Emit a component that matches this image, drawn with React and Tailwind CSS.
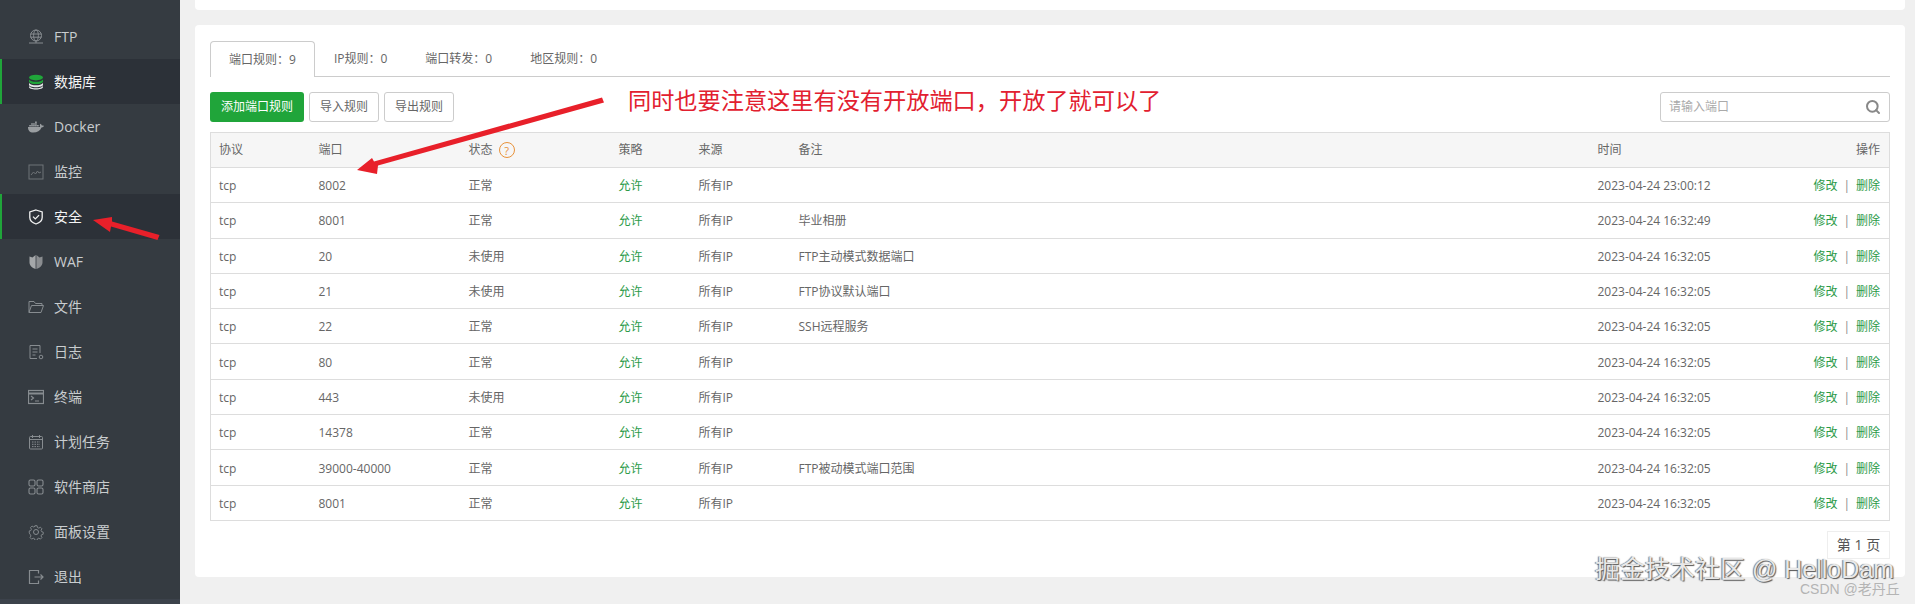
import { Search } from "lucide-react";
import { FaDocker } from "react-icons/fa";

const NAV = [
    { label: "FTP", icon: "ftp" },
    { label: "数据库", icon: "db", active: true },
    { label: "Docker", icon: "docker" },
    { label: "监控", icon: "monitor" },
    { label: "安全", icon: "shield", active: true },
    { label: "WAF", icon: "waf" },
    { label: "文件", icon: "folder" },
    { label: "日志", icon: "log" },
    { label: "终端", icon: "term" },
    { label: "计划任务", icon: "cal" },
    { label: "软件商店", icon: "apps" },
    { label: "面板设置", icon: "gear" },
    { label: "退出", icon: "exit" },
];

const TABS = ["端口规则：9", "IP规则：0", "端口转发：0", "地区规则：0"];

const ROWS = [
    ["8002", "正常", "", "2023-04-24 23:00:12"],
    ["8001", "正常", "毕业相册", "2023-04-24 16:32:49"],
    ["20", "未使用", "FTP主动模式数据端口", "2023-04-24 16:32:05"],
    ["21", "未使用", "FTP协议默认端口", "2023-04-24 16:32:05"],
    ["22", "正常", "SSH远程服务", "2023-04-24 16:32:05"],
    ["80", "正常", "", "2023-04-24 16:32:05"],
    ["443", "未使用", "", "2023-04-24 16:32:05"],
    ["14378", "正常", "", "2023-04-24 16:32:05"],
    ["39000-40000", "正常", "FTP被动模式端口范围", "2023-04-24 16:32:05"],
    ["8001", "正常", "", "2023-04-24 16:32:05"],
];

function NavIcon({ name }) {
    if (name === "docker") return <FaDocker className="w-[16px] h-[16px] text-[#9a9ea1]" />;
    const common = { width: 16, height: 16, viewBox: "0 0 16 16", fill: "none", stroke: "#878c90", strokeWidth: 1 };
    if (name === "ftp") return (
        <svg {...common}>
            <circle cx="8" cy="6.5" r="5.5" />
            <ellipse cx="8" cy="6.5" rx="2.4" ry="5.5" />
            <path d="M2.5 5h11M2.5 8.2h11M1 14h14M8 12v2" />
        </svg>
    );
    if (name === "db") return (
        <svg width="16" height="16" viewBox="0 0 16 16">
            <ellipse cx="8" cy="3.6" rx="7" ry="2.8" fill="#20a53a" />
            <path d="M1 5.5v2c0 1.5 3 2.6 7 2.6s7-1.100 7-2.600v-2c-1 1.500-4 2.300-7 2.300S2 7 1 5.500z" fill="#20a53a" />
            <path d="M1 9v1.800c0 1.500 3 2.500 7 2.500s7-1 7-2.500V9c-1 1.500-4 2.300-7 2.300S2 10.500 1 9z" fill="#e6e8e9" />
            <path d="M1 12v1c0 1.500 3 2.500 7 2.500s7-1 7-2.500v-1c-1 1.500-4 2.300-7 2.300S2 13.500 1 12z" fill="#e6e8e9" />
        </svg>
    );
    if (name === "monitor") return (
        <svg {...common} stroke="#6f7478">
            <rect x="1" y="1" width="14" height="14" />
            <path d="M3 11l2.500-3 2 2 2-3 1.500 2 2-1" />
        </svg>
    );
    if (name === "shield") return (
        <svg width="16" height="16" viewBox="0 0 16 16" fill="none" stroke="#f2f3f3" strokeWidth="1.300">
            <path d="M8 1l6.200 2v5.500c0 3-2.800 5.300-6.200 6.500-3.400-1.200-6.200-3.500-6.200-6.500V3z" />
            <path d="M5 7.600l2.300 2.300 3.800-3.800" />
        </svg>
    );
    if (name === "waf") return (
        <svg width="16" height="16" viewBox="0 0 16 16">
            <path d="M1.500 2.500L4.500 3.500 7.600 1v14C4 13.800 1.500 11.500 1.500 8.500z" fill="#a4a7a9" />
            <path d="M14.500 2.500L11.500 3.500 8.400 1v14c3.600-1.200 6.100-3.500 6.100-6.500z" fill="#8a8d90" />
        </svg>
    );
    if (name === "folder") return (
        <svg {...common}>
            <path d="M1 13.500V2.500h5l1.500 2H14v2" />
            <path d="M1 13.500l2.500-7H15.500l-2.500 7z" />
        </svg>
    );
    if (name === "log") return (
        <svg {...common}>
            <path d="M12 9V1.500H2v13h7" />
            <path d="M4.500 5h5M4.500 8h5M4.500 11h3" />
            <circle cx="13" cy="13" r="1.800" />
        </svg>
    );
    if (name === "term") return (
        <svg {...common} strokeWidth="1.200">
            <rect x="0.500" y="1.500" width="15" height="13" />
            <path d="M0.500 4.500h15" strokeWidth="2" />
            <path d="M3 7l2.500 2L3 11M7 12h4" />
        </svg>
    );
    if (name === "cal") return (
        <svg {...common}>
            <rect x="1.500" y="2.500" width="13" height="12.500" rx="1" />
            <path d="M1.500 5.500h13M4.500 1v3M11.500 1v3" />
            <path d="M4 8h8M4 10.300h8M4 12.600h8" strokeDasharray="1.500 1" />
        </svg>
    );
    if (name === "apps") return (
        <svg {...common} strokeWidth="1.100">
            <rect x="1" y="1" width="6" height="6" rx="1.500" />
            <rect x="9" y="1" width="6" height="6" rx="1.500" />
            <rect x="1" y="9" width="6" height="6" rx="1.500" />
            <rect x="9" y="9" width="6" height="6" rx="1.500" />
        </svg>
    );
    if (name === "gear") return (
        <svg {...common}>
            <circle cx="8" cy="8" r="2.500" />
            <path d="M6.800 1h2.400l.4 2 1.500.7 1.800-1 1.700 1.700-1 1.800.7 1.500 1.700.4v2.400l-1.700.4-.7 1.500 1 1.800-1.700 1.700-1.800-1-1.500.7-.4 1.700H6.800l-.4-1.700-1.500-.7-1.800 1-1.700-1.700 1-1.800-.7-1.500L.5 9.200V6.800l1.700-.4.7-1.500-1-1.800 1.700-1.700 1.800 1 1.500-.7z" transform="translate(0.800 0.800) scale(0.9)" />
        </svg>
    );
    return (
        <svg {...common} strokeWidth="1.200">
            <path d="M10.500 4.500V1.500H1.500v13h9v-3" />
            <path d="M6.500 8h8.500M12.500 5.500L15 8l-2.500 2.500" />
        </svg>
    );
}

function Sidebar() {
    return (
        <aside className="w-[180px] shrink-0 h-full bg-[#353b41] flex flex-col pt-[14px] overflow-hidden">
            {NAV.map((item) => (
                <div
                    key={item.label}
                    className={
                        item.active
                            ? "h-[45px] shrink-0 flex items-center gap-[10px] pl-[26px] border-l-2 border-[#20a53a] bg-[#2c3138] text-[14px] text-[#f4f5f5]"
                            : "h-[45px] shrink-0 flex items-center gap-[10px] pl-[28px] text-[14px] text-[#c9cdcf]"
                    }
                >
                    <NavIcon name={item.icon} />
                    <span>{item.label}</span>
                </div>
            ))}
            <div className="flex-1" />
            <div className="h-[6px] shrink-0 bg-[#3c424b]" />
        </aside>
    );
}

function PortTable() {
    return (
        <table className="w-full table-fixed border-collapse border border-[#ddd] text-[12px] text-[#666]">
            <colgroup>
                <col className="w-[100px]" />
                <col className="w-[150px]" />
                <col className="w-[150px]" />
                <col className="w-[80px]" />
                <col className="w-[100px]" />
                <col className="w-[799px]" />
                <col className="w-[150px]" />
                <col />
            </colgroup>
            <thead>
                <tr className="h-[35px] bg-[#f6f6f6] border-b border-[#ddd]">
                    <th className="pl-[8px] text-left font-normal">协议</th>
                    <th className="pl-[8px] text-left font-normal">端口</th>
                    <th className="pl-[8px] text-left font-normal">
                        <span className="inline-flex items-center gap-[6px]">
                            状态
                            <span className="w-[16px] h-[16px] rounded-full border border-[#e8923a] text-[#e8923a] flex items-center justify-center text-[11px] leading-none">?</span>
                        </span>
                    </th>
                    <th className="pl-[8px] text-left font-normal">策略</th>
                    <th className="pl-[8px] text-left font-normal">来源</th>
                    <th className="pl-[8px] text-left font-normal">备注</th>
                    <th className="pl-[8px] text-left font-normal">时间</th>
                    <th className="pr-[9px] text-right font-normal">操作</th>
                </tr>
            </thead>
            <tbody>
                {ROWS.map((row, i) => (
                    <tr key={i} className="h-[35.3px] border-b border-[#ddd]">
                        <td className="pl-[8px] pt-[2px]">tcp</td>
                        <td className="pl-[8px] pt-[2px]">{row[0]}</td>
                        <td className="pl-[8px] pt-[2px]">{row[1]}</td>
                        <td className="pl-[8px] pt-[2px] text-[#2b9a48]">允许</td>
                        <td className="pl-[8px] pt-[2px]">所有IP</td>
                        <td className="pl-[8px] pt-[2px]">{row[2]}</td>
                        <td className="pl-[8px] pt-[2px]">{row[3]}</td>
                        <td className="pr-[9px] pt-[2px] text-right whitespace-nowrap">
                            <span className="text-[#2b9a48]">修改</span>
                            <span className="mx-[6px] text-[#888]">|</span>
                            <span className="text-[#2b9a48]">删除</span>
                        </td>
                    </tr>
                ))}
            </tbody>
        </table>
    );
}

export default function App() {
    return (
        <div
            className="relative w-full h-[604px] flex overflow-hidden bg-[#f0f0f0]"
            style={{ fontFamily: '"Open Sans", "Noto Sans CJK SC", sans-serif' }}
        >
            <Sidebar />

            <main className="flex-1 pl-[15px] pr-[10px] flex flex-col">
                <div className="h-[10px] shrink-0 bg-white rounded-b-[4px] mb-[15px]" />

                <section className="h-[552px] shrink-0 bg-white rounded-[4px] px-[15px] pt-[16px]">
                    <div className="flex h-[36px] border-b border-[#ccc] text-[12px] text-[#666]">
                        {TABS.map((tab, i) => (
                            <div
                                key={tab}
                                className={
                                    i === 0
                                        ? "h-[36px] px-[18px] flex items-center bg-white border border-b-0 border-[#ccc] rounded-t-[4px]"
                                        : "h-[35px] px-[19px] flex items-center"
                                }
                            >
                                {tab}
                            </div>
                        ))}
                    </div>

                    <div className="flex items-center mt-[15px] h-[30px] text-[12px]">
                        <button className="h-[30px] w-[94px] bg-[#20a53a] text-white rounded-[3px]">添加端口规则</button>
                        <button className="h-[30px] w-[70px] ml-[5px] bg-white border border-[#ccc] text-[#666] rounded-[3px]">导入规则</button>
                        <button className="h-[30px] w-[70px] ml-[5px] bg-white border border-[#ccc] text-[#666] rounded-[3px]">导出规则</button>
                        <div className="ml-auto w-[230px] h-[30px] border border-[#ccc] rounded-[3px] flex items-center justify-between pl-[8px] pr-[8px]">
                            <span className="text-[#aaa]">请输入端口</span>
                            <Search className="w-[16px] h-[16px] text-[#888]" strokeWidth={3} />
                        </div>
                    </div>

                    <div className="mt-[10px]">
                        <PortTable />
                    </div>

                    <div className="flex justify-end mt-[10px]">
                        <div className="w-[63px] h-[28px] border border-[#eee] flex items-center justify-center text-[14px] text-[#555]">第 1 页</div>
                    </div>
                </section>
            </main>

            {/* screenshot annotations on top of the page */}
            <span className="absolute left-[628px] top-[85px] text-[23.200px] leading-[30px] text-[#e2202f] whitespace-nowrap">
                同时也要注意这里有没有开放端口，开放了就可以了
            </span>
            <svg className="absolute left-0 top-0 pointer-events-none" width="1915" height="604" fill="#e8202a">
                <path d="M602 97.500L604 102.500L378 165.500L377 174L357 170L372 158L374 161.500Z" />
                <path d="M159.500 235L157.500 240L111 226.500L110 232L93 220L112 217L112 221.500Z" />
            </svg>
            <span
                className="absolute left-[1595px] top-[552px] text-[25px] leading-[34px] text-[#e8e8e8] whitespace-nowrap [text-shadow:1px_1px_1px_#555,-1px_0_1px_#777]"
                style={{ fontFamily: '"Liberation Sans", "Noto Sans CJK SC", sans-serif' }}
            >
                掘金技术社区 @ HelloDam
            </span>
            <span
                className="absolute left-[1800px] top-[579px] text-[14px] leading-[20px] text-[#b4b4b4] whitespace-nowrap"
                style={{ fontFamily: '"Liberation Sans", "Noto Sans CJK SC", sans-serif' }}
            >
                CSDN @老丹丘
            </span>
        </div>
    );
}
